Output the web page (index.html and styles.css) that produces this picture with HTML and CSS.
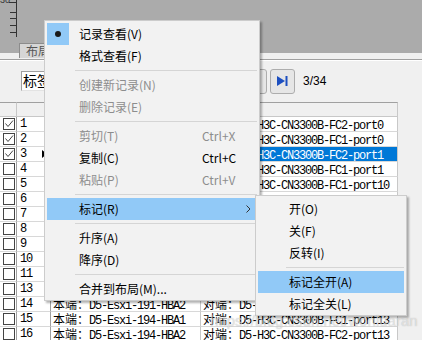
FILE: index.html
```html
<!DOCTYPE html>
<html lang="zh-CN">
<head>
  <meta charset="UTF-8" />
  <title>布局 - 记录查看</title>
  <link rel="stylesheet" href="styles.css">
</head>
<body>
  <div class="screen">
    <div class="canvas">
      <svg class="ruler" width="17" height="37" viewBox="0 0 17 37">
        <text x="0" y="3" class="ruler-num">30</text>
        <line x1="16.5" y1="0" x2="16.5" y2="37" />
        <line x1="9" y1="2.5" x2="16" y2="2.5" />
        <line x1="10" y1="12.5" x2="16" y2="12.5" />
        <line x1="10" y1="18.5" x2="16" y2="18.5" />
        <line x1="10" y1="25.5" x2="16" y2="25.5" />
        <line x1="10" y1="32.5" x2="16" y2="32.5" />
      </svg>
    </div>

    <div class="tabstrip">
      <span class="tab">布局</span>
    </div>

    <div class="panel">
      <div class="toolbar">
        <div class="field">标签</div>
        <div class="pager">
          <button class="pager-btn">
            <svg width="10" height="10" viewBox="0 0 10 10"><path d="M10 0 L2 5 L10 10 Z" fill="#1c4fc0"/></svg>
          </button>
          <button class="pager-btn">
            <svg width="11" height="10" viewBox="0 0 11 10"><path d="M0 0 L8 5 L0 10 Z" fill="#1c4fc0"/><rect x="8.5" y="0" width="2" height="10" fill="#1c4fc0"/></svg>
          </button>
          <span class="pager-count">3/34</span>
        </div>
      </div>

      <div class="grid">
        <div class="row head">
          <div class="cell"></div><div class="cell"></div><div class="cell"></div><div class="cell"></div>
        </div>
        <div class="row"><div class="cell chk"><span class="box on"></span></div><div class="cell num">1</div><div class="cell"><span class="cjk">本端：</span>D5-Esxi-190-HBA1</div><div class="cell"><span class="cjk">对端：</span>D5-H3C-CN3300B-FC2-port0</div></div>
        <div class="row"><div class="cell chk"><span class="box on"></span></div><div class="cell num">2</div><div class="cell"><span class="cjk">本端：</span>D5-Esxi-190-HBA2</div><div class="cell"><span class="cjk">对端：</span>D5-H3C-CN3300B-FC1-port0</div></div>
        <div class="row"><div class="cell chk"><span class="box on"></span></div><div class="cell num">3<span class="marker"></span></div><div class="cell"><span class="cjk">本端：</span>D5-Esxi-191-HBA1</div><div class="cell current"><span class="cjk">对端：</span>D5-H3C-CN3300B-FC2-port1</div></div>
        <div class="row"><div class="cell chk"><span class="box"></span></div><div class="cell num">4</div><div class="cell"><span class="cjk">本端：</span>D5-Esxi-191-HBA2</div><div class="cell"><span class="cjk">对端：</span>D5-H3C-CN3300B-FC1-port1</div></div>
        <div class="row"><div class="cell chk"><span class="box"></span></div><div class="cell num">5</div><div class="cell"><span class="cjk">本端：</span>D5-Esxi-192-HBA1</div><div class="cell"><span class="cjk">对端：</span>D5-H3C-CN3300B-FC1-port10</div></div>
        <div class="row"><div class="cell chk"><span class="box"></span></div><div class="cell num">6</div><div class="cell"><span class="cjk">本端：</span>D5-Esxi-192-HBA2</div><div class="cell"><span class="cjk">对端：</span>D5-H3C-CN3300B-FC2-port10</div></div>
        <div class="row"><div class="cell chk"><span class="box"></span></div><div class="cell num">7</div><div class="cell"><span class="cjk">本端：</span>D5-Esxi-193-HBA1</div><div class="cell"><span class="cjk">对端：</span>D5-H3C-CN3300B-FC1-port11</div></div>
        <div class="row"><div class="cell chk"><span class="box"></span></div><div class="cell num">8</div><div class="cell"><span class="cjk">本端：</span>D5-Esxi-193-HBA2</div><div class="cell"><span class="cjk">对端：</span>D5-H3C-CN3300B-FC2-port11</div></div>
        <div class="row"><div class="cell chk"><span class="box"></span></div><div class="cell num">9</div><div class="cell"><span class="cjk">本端：</span>D5-Esxi-190-HBA3</div><div class="cell"><span class="cjk">对端：</span>D5-H3C-CN3300B-FC1-port12</div></div>
        <div class="row"><div class="cell chk"><span class="box"></span></div><div class="cell num">10</div><div class="cell"><span class="cjk">本端：</span>D5-Esxi-190-HBA4</div><div class="cell"><span class="cjk">对端：</span>D5-H3C-CN3300B-FC2-port12</div></div>
        <div class="row"><div class="cell chk"><span class="box"></span></div><div class="cell num">11</div><div class="cell"><span class="cjk">本端：</span>D5-Esxi-191-HBA3</div><div class="cell"><span class="cjk">对端：</span>D5-H3C-CN3300B-FC1-port2</div></div>
        <div class="row"><div class="cell chk"><span class="box"></span></div><div class="cell num">13</div><div class="cell"><span class="cjk">本端：</span>D5-Esxi-191-HBA1</div><div class="cell"><span class="cjk">对端：</span>D5-H3C-CN3300B-FC2-port2</div></div>
        <div class="row"><div class="cell chk"><span class="box"></span></div><div class="cell num">14</div><div class="cell"><span class="cjk">本端：</span>D5-Esxi-191-HBA2</div><div class="cell"><span class="cjk">对端：</span>D5-H3C-CN3300B-FC1-port3</div></div>
        <div class="row"><div class="cell chk"><span class="box"></span></div><div class="cell num">15</div><div class="cell"><span class="cjk">本端：</span>D5-Esxi-194-HBA1</div><div class="cell"><span class="cjk">对端：</span>D5-H3C-CN3300B-FC1-port13</div></div>
        <div class="row"><div class="cell chk"><span class="box"></span></div><div class="cell num">16</div><div class="cell"><span class="cjk">本端：</span>D5-Esxi-194-HBA2</div><div class="cell"><span class="cjk">对端：</span>D5-H3C-CN3300B-FC2-port13</div></div>
      </div>
    </div>

    <!-- context menu -->
    <div class="menu main-menu">
      <div class="item"><span class="icon checked"><span class="dot"></span></span><span class="label">记录查看(V)</span></div>
      <div class="item"><span class="icon"></span><span class="label">格式查看(F)</span></div>
      <div class="sep"></div>
      <div class="item disabled"><span class="icon"></span><span class="label">创建新记录(N)</span></div>
      <div class="item disabled"><span class="icon"></span><span class="label">删除记录(E)</span></div>
      <div class="sep"></div>
      <div class="item disabled"><span class="icon"></span><span class="label">剪切(T)</span><span class="key">Ctrl+X</span></div>
      <div class="item"><span class="icon"></span><span class="label">复制(C)</span><span class="key">Ctrl+C</span></div>
      <div class="item disabled"><span class="icon"></span><span class="label">粘贴(P)</span><span class="key">Ctrl+V</span></div>
      <div class="sep"></div>
      <div class="item active"><span class="icon"></span><span class="label">标记(R)</span><span class="key"></span>
        <svg class="arrow" width="5" height="8" viewBox="0 0 5 8"><polyline points="0.5,0.5 4,4 0.5,7.5" fill="none" stroke="#333" stroke-width="1"/></svg>
      </div>
      <div class="sep"></div>
      <div class="item"><span class="icon"></span><span class="label">升序(A)</span></div>
      <div class="item"><span class="icon"></span><span class="label">降序(D)</span></div>
      <div class="sep"></div>
      <div class="item"><span class="icon"></span><span class="label">合并到布局(M)...</span></div>
    </div>

    <div class="menu sub-menu">
      <div class="item"><span class="icon"></span><span class="label">开(O)</span></div>
      <div class="item"><span class="icon"></span><span class="label">关(F)</span></div>
      <div class="item"><span class="icon"></span><span class="label">反转(I)</span></div>
      <div class="sep"></div>
      <div class="item active"><span class="icon"></span><span class="label">标记全开(A)</span></div>
      <div class="item"><span class="icon"></span><span class="label">标记全关(L)</span></div>
    </div>

    <div class="watermark">https://blog.csdn.net/woniuaran</div>
  </div>
</body>
</html>
```

FILE: styles.css
```css
body {
  margin: 0;
  background: #ababab;
}
.screen {
  position: relative;
  width: 422px;
  height: 340px;
  overflow: hidden;
  background: #ababab;
  font-family: "Noto Sans CJK SC", sans-serif;
}

/* top canvas with ruler */
.canvas {
  height: 37px;
  background: #ababab;
}
.ruler {
  display: block;
}
.ruler line {
  stroke: #333;
  stroke-width: 1;
}
.ruler-num {
  font-family: "Liberation Sans", sans-serif;
  font-size: 9px;
  fill: #333;
}

.tabstrip {
  height: 16px;
  background: #ababab;
  padding-left: 19px;
}
.tab {
  display: inline-block;
  box-sizing: border-box;
  height: 15px;
  margin-top: 1px;
  padding: 0 6px;
  background: #d6d6d6;
  border: 1px solid #8c8c8c;
  border-bottom: none;
  color: #555;
  font-size: 12px;
  line-height: 13px;
}

/* toolbar + grid */
.panel {
  background: #f0f0f0;
  padding-top: 6px;
}
.toolbar {
  display: flex;
  align-items: center;
  height: 42px;
  padding-left: 21px;
  border-top: 1px solid #a0a0a0;
  box-shadow: inset 0 1px 0 #fff;
}
.field {
  box-sizing: border-box;
  width: 120px;
  height: 20px;
  background: #fff;
  border: 1px solid #a0a0a0;
  border-right-color: #e3e3e3;
  border-bottom-color: #e3e3e3;
  font-size: 14px;
  line-height: 17px;
  padding-left: 1px;
  color: #000;
}
.pager {
  display: flex;
  align-items: center;
  gap: 3px;
  margin-left: 101px;
}
.pager-btn {
  box-sizing: border-box;
  width: 25px;
  height: 25px;
  padding: 0;
  display: flex;
  align-items: center;
  justify-content: center;
  background: #e6e6e6;
  border: 1px solid #adadad;
  border-radius: 3px;
}
.pager-count {
  margin-left: 5px;
  font-family: "Liberation Sans", sans-serif;
  font-size: 12px;
  color: #000;
}

.grid {
  width: 398px;
  background: #fff;
}
.row {
  display: grid;
  grid-template-columns: 17px 34px 150px 197px;
  height: 15px;
}
.cell {
  box-sizing: border-box;
  height: 15px;
  border-right: 1px solid #c8c8c8;
  border-bottom: 1px solid #d8d8d8;
  padding-left: 2px;
  font-family: "Liberation Mono", "Noto Sans CJK SC", monospace;
  font-size: 12px;
  letter-spacing: -1.2px;
  line-height: 14px;
  color: #000;
  white-space: nowrap;
  overflow: hidden;
}
.cell .cjk {
  font-family: "Noto Sans CJK SC", sans-serif;
  letter-spacing: 0;
}
.head .cell {
  background: #f0f0f0;
  border-top: 1px solid #a0a0a0;
  border-bottom-color: #c8c8c8;
}
.chk {
  padding-left: 3px;
  border-right-color: #a0a0a0;
}
.box {
  display: block;
  box-sizing: border-box;
  width: 12px;
  height: 12px;
  margin-top: 1px;
  border: 1px solid #444;
  background: #fff;
}
.box.on {
  background: #fff url("data:image/svg+xml;utf8,<svg xmlns='http://www.w3.org/2000/svg' width='10' height='10'><polyline points='1.5,4.5 4,7.5 9,1.5' fill='none' stroke='%23444' stroke-width='1'/></svg>") no-repeat center;
}
.num {
  display: flex;
  align-items: center;
  padding-left: 3px;
  border-right-color: #a0a0a0;
}
.marker {
  margin-left: auto;
  margin-right: 3px;
  width: 0;
  height: 0;
  border-top: 4px solid transparent;
  border-bottom: 4px solid transparent;
  border-left: 5px solid #000;
}
.cell.current {
  background: #0078d7;
  color: #fff;
}

/* context menus */
.menu {
  position: absolute;
  box-sizing: border-box;
  padding: 2px 2px 0;
  background: #f2f2f2;
  border: 1px solid #cccccc;
  box-shadow: 2px 2px 2px rgba(0, 0, 0, 0.3);
  font-family: "Noto Sans CJK SC", sans-serif;
  font-size: 12px;
  color: #000;
}
.main-menu {
  left: 44px;
  top: 20px;
  width: 216px;
}
.sub-menu {
  left: 255px;
  top: 195px;
  width: 152px;
}
.item {
  display: grid;
  grid-template-columns: 32px 123px 40px 1fr;
  align-items: center;
  height: 22px;
  line-height: 22px;
  white-space: nowrap;
}
.sub-menu .item {
  grid-template-columns: 31px 1fr;
}
.item.active {
  background: #91c9f7;
}
.item.disabled {
  color: #8d8d8d;
}
.icon {
  height: 22px;
}
.icon.checked {
  width: 22px;
  display: flex;
  align-items: center;
  justify-content: center;
  background: #91c9f7;
}
.dot {
  width: 6px;
  height: 6px;
  border-radius: 50%;
  background: #1a1a1a;
}
.arrow {
  margin-left: 4px;
}
.sep {
  height: 7px;
  margin-left: 28px;
  background: linear-gradient(#d5d5d5, #d5d5d5) no-repeat 0 3px / 100% 1px;
}

.watermark {
  position: absolute;
  left: 210px;
  top: 312px;
  font-family: "Liberation Sans", sans-serif;
  font-size: 15px;
  color: rgba(255, 255, 255, 0.5);
  text-shadow: 0 0 1px rgba(120, 120, 120, 0.5);
  white-space: nowrap;
}
```
